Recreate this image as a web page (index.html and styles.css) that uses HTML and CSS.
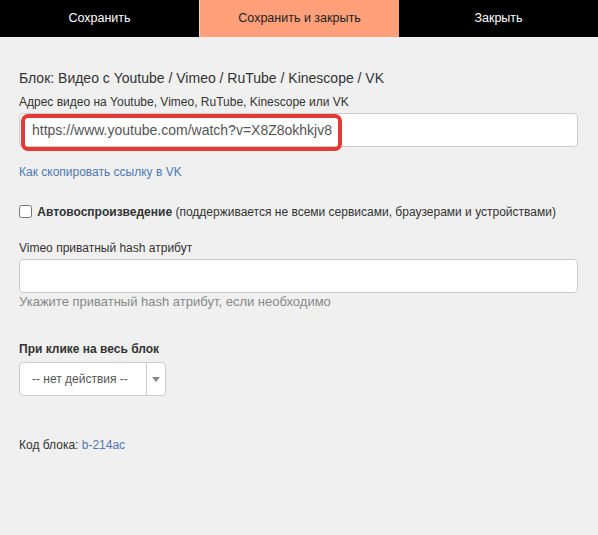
FILE: index.html
```html
<!DOCTYPE html>
<html lang="ru">

<head>
    <meta charset="UTF-8">
    <meta name="viewport" content="width=device-width, initial-scale=1.0">
    <title>Редактирование блока</title>
    <link rel="stylesheet" href="styles.css">
</head>

<body>
    <div class="topbar">
        <a class="btn" href="javascript:;">Сохранить</a>
        <a class="btn active" href="javascript:;">Сохранить и закрыть</a>
        <a class="btn" href="javascript:;">Закрыть</a>
    </div>

    <div class="content">
        <h3 class="title">Блок: Видео с Youtube / Vimeo / RuTube / Kinescope / VK</h3>

        <div class="field">
            <label class="label">Адрес видео на Youtube, Vimeo, RuTube, Kinescope или VK</label>
            <div class="input-wrap">
                <input class="input" type="text" value="https://www.youtube.com/watch?v=X8Z8okhkjv8">
                <span class="mark"></span>
            </div>
        </div>

        <a class="link" href="javascript:;">Как скопировать ссылку в VK</a>

        <label class="check">
            <input type="checkbox">
            <b>Автовоспроизведение</b> (поддерживается не всеми сервисами, браузерами и устройствами)
        </label>

        <div class="field">
            <label class="label">Vimeo приватный hash атрибут</label>
            <input class="input" type="text">
            <div class="hint">Укажите приватный hash атрибут, если необходимо</div>
        </div>

        <div class="field click">
            <label class="label bold">При клике на весь блок</label>
            <div class="select">
                <span class="select-val">-- нет действия --</span>
                <span class="select-arrow"></span>
            </div>
        </div>

        <div class="code">Код блока: <span>b-214ac</span></div>
    </div>
</body>

</html>
```

FILE: styles.css
```css
* {
    margin: 0;
    padding: 0;
    box-sizing: border-box;
}

a {
    text-decoration: none;
}

body {
    background-color: #f0f0f0;
    font-family: "Liberation Sans", Arial, sans-serif;
    font-size: 12px;
    color: #333;
}

.topbar {
    display: flex;
    height: 37px;
    background-color: #000;
}

.topbar .btn {
    flex: 1;
    text-align: center;
    line-height: 37px;
    font-size: 12.5px;
    color: #fff;
}

.topbar .btn.active {
    color: #222;
    background-color: #ffa07a;
    border-left: 1px solid #ddd;
}

.content {
    padding: 32px 20px 0 19px;
}

.title {
    font-size: 14px;
    font-weight: normal;
    color: #333;
    line-height: 18px;
}

.field {
    margin-top: 7px;
}

.label {
    display: block;
    line-height: 16px;
    margin-bottom: 3px;
}

.label.bold {
    font-weight: bold;
    margin-bottom: 5px;
}

.input-wrap {
    position: relative;
}

.input {
    display: block;
    width: 100%;
    height: 34px;
    padding: 0 12px;
    border: 1px solid #ccc;
    border-radius: 4px;
    background-color: #fff;
    font-family: "Liberation Sans", Arial, sans-serif;
    font-size: 14px;
    color: #555;
    outline: none;
}

/* красная рамка-пометка поверх поля */
.mark {
    position: absolute;
    left: 2px;
    top: 1px;
    width: 321px;
    height: 37px;
    border: 4px solid #e53935;
    border-radius: 7px;
}

.link {
    display: inline-block;
    margin-top: 17px;
    line-height: 16px;
    color: #4f78b4;
}

.check {
    display: block;
    margin-top: 24px;
    line-height: 16px;
}

.check input {
    width: 13px;
    height: 13px;
    margin: 0 2px 0 0;
    vertical-align: -2px;
}

.check + .field {
    margin-top: 20px;
}

.hint {
    margin-top: 1px;
    line-height: 16px;
    font-size: 13px;
    color: #888;
}

.field.click {
    margin-top: 31px;
}

.select {
    display: flex;
    width: 147px;
    height: 34px;
    border: 1px solid #ccc;
    border-radius: 4px;
    background-color: #fff;
}

.select-val {
    flex: 1;
    padding-left: 12px;
    line-height: 32px;
    color: #555;
    border-right: 1px solid #ccc;
}

.select-arrow {
    position: relative;
    width: 18px;
}

.select-arrow::before {
    content: "";
    position: absolute;
    left: 5px;
    top: 14px;
    border-left: 4px solid transparent;
    border-right: 4px solid transparent;
    border-top: 5px solid #888;
}

.code {
    margin-top: 41px;
    line-height: 16px;
}

.code span {
    color: #4f78b4;
}
```
